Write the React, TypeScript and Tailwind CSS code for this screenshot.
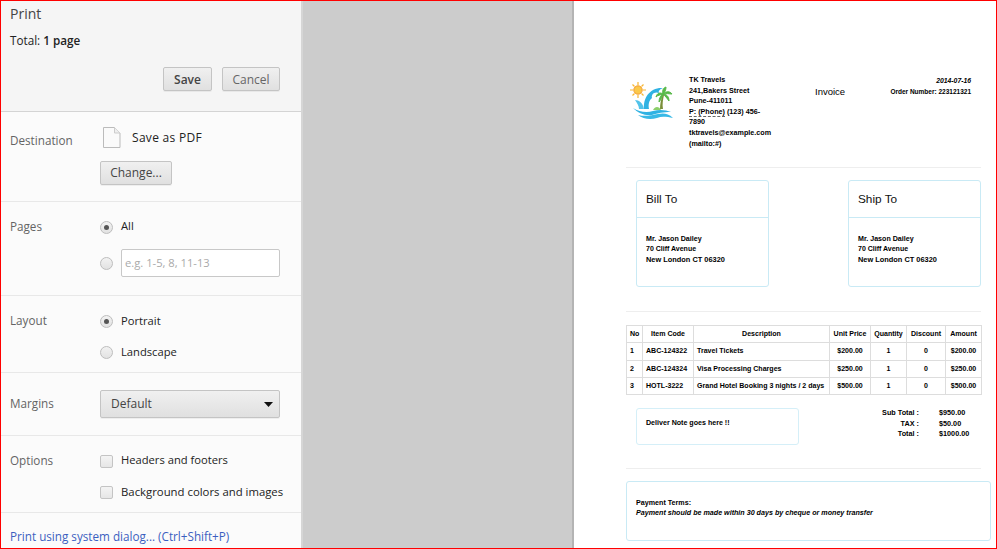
import React from "react";

const ui = "font-['Open_Sans',sans-serif]";
const doc = "font-['Liberation_Sans',Arial,sans-serif]";

const btn =
  "rounded-[2px] border border-[#c4c4c4] bg-gradient-to-b from-[#f0f0f0] to-[#e0e0e0] text-[12px] text-[#444] shadow-[0_1px_0_rgba(0,0,0,0.05)]";

const Section = ({ label, className, children }: { label: string; className: string; children: React.ReactNode }) => (
  <div className={`flex border-b border-[#e8e8e8] pl-[9px] ${className}`}>
    <div className="-mt-[1px] w-[90px] text-[11.7px] leading-[16px] text-[#646464]">{label}</div>
    <div className="flex flex-1 flex-col">{children}</div>
  </div>
);

const Radio = ({ checked }: { checked?: boolean }) => (
  <span className="flex h-[13px] w-[13px] shrink-0 items-center justify-center rounded-full border border-[#bdbdbd] bg-gradient-to-b from-[#f2f2f2] to-[#e2e2e2]">
    {checked && <span className="h-[5px] w-[5px] rounded-full bg-[#555]" />}
  </span>
);

const Check = () => (
  <span className="h-[13px] w-[13px] shrink-0 rounded-[2px] border border-[#c4c4c4] bg-gradient-to-b from-[#f4f4f4] to-[#e6e6e6]" />
);

const Sidebar = () => (
  <aside className={`flex w-[300px] shrink-0 flex-col bg-[#fbfbfb] ${ui}`}>
    <div className="h-[111px] border-b border-[#d4d4d4] bg-[#f5f5f5] pl-[9px] pr-[21px] pt-[3px]">
      <div className="text-[14px] leading-[19px] text-[#444]">Print</div>
      <div className="mt-[9px] text-[11.7px] leading-[16px] text-[#222]">
        Total: <b className="font-semibold">1 page</b>
      </div>
      <div className="mt-[19px] flex justify-end gap-[10px]">
        <button className={`${btn} h-[24px] w-[49px] border-[#8a8a8a] pt-[1px] font-semibold`}>Save</button>
        <button className={`${btn} h-[24px] w-[58px] pt-[1px] text-[#666]`}>Cancel</button>
      </div>
    </div>

    <Section label="Destination" className="h-[90px] pt-[21px]">
      <div className="-mt-[6px] flex items-center">
        <svg width="18" height="21" viewBox="0 0 18 21" className="ml-[3px]">
          <path d="M.5.5h11l5.5 5.5v14.5H.5z" fill="#fafafa" stroke="#bbb" />
          <path d="M11.5.5V6H17" fill="#eee" stroke="#ccc" />
        </svg>
        <span className="ml-[11px] text-[12px] tracking-[0.3px] text-[#222]">Save as PDF</span>
      </div>
      <button className={`${btn} mt-[13px] h-[24px] w-[72px]`}>Change...</button>
    </Section>

    <Section label="Pages" className="h-[94px] pt-[17px]">
      <div className="flex h-[16px] items-center gap-[8px] text-[11.2px] text-[#222]">
        <Radio checked /> <span className="-mt-[1px]">All</span>
      </div>
      <div className="mt-[14px] flex items-center gap-[8px]">
        <Radio />
        <div className="flex h-[28px] w-[159px] items-center rounded-[2px] border border-[#c8c8c8] bg-white pl-[3px] text-[11.2px] text-[#aaa]">
          e.g. 1-5, 8, 11-13
        </div>
      </div>
    </Section>

    <Section label="Layout" className="h-[77px] pt-[17px]">
      <div className="flex h-[16px] items-center gap-[8px] text-[11.2px] text-[#222]">
        <Radio checked /> Portrait
      </div>
      <div className="mt-[15px] flex h-[16px] items-center gap-[8px] text-[11.2px] text-[#222]">
        <Radio /> Landscape
      </div>
    </Section>

    <Section label="Margins" className="h-[63px] pt-[23px]">
      <div className={`${btn} -mt-[6px] flex h-[28px] w-[180px] items-center justify-between pl-[10px] pr-[6px]`}>
        Default
        <svg width="9" height="5" viewBox="0 0 9 5">
          <path d="M0 0h9L4.5 5z" fill="#111" />
        </svg>
      </div>
    </Section>

    <Section label="Options" className="h-[77px] pt-[17px]">
      <div className="flex h-[16px] items-center gap-[8px] text-[11.2px] text-[#222]">
        <Check /> <span className="-mt-[1px]">Headers and footers</span>
      </div>
      <div className="mt-[15px] flex h-[16px] items-center gap-[8px] whitespace-nowrap text-[11.35px] text-[#222]">
        <Check /> <span className="-mt-[1px]">Background colors and images</span>
      </div>
    </Section>

    <div className="pl-[9px] pt-[15px] text-[11.7px] leading-[16px] text-[#3b5fc0]">
      Print using system dialog... (Ctrl+Shift+P)
    </div>
  </aside>
);

const Logo = () => (
  <svg width="46" height="40" viewBox="0 0 46 40">
    <g stroke="#f7b733" strokeWidth="1.2">
      <path d="M8 0v3M8 13v3M0 8h3M13 8h3M2.5 2.5l2 2M11.5 11.5l2 2M13.5 2.5l-2 2M4.500 11.500l-2 2" />
    </g>
    <circle cx="8" cy="8" r="4.200" fill="#fbc94a" stroke="#f39c32" />
    <path d="M14 27C13 16 20 5 33 6 30 7 28 9 29 11 24 9 21 13 22 16 19 18 18 23 19 27z" fill="#2fb2e3" />
    <path d="M5 18c4 0 8 3 9 9l-5 0c0-3-2-6-4-9z" fill="#52c3ea" />
    <path d="M30 27c0-5 1-10 3-15l1 1c-1 5-2 9-1 14z" fill="#7b8f3a" />
    <path d="M33 12c-3-2-6-1-7 3 2-2 4-2 7-3zM33 12c-1-3 0-6 3-7 0 3-1 5-3 7zM33 12c3-3 7-3 9 0-3 0-6-1-9 0zM33 12c3 0 6 2 6 7-2-3-4-5-6-7zM33 12c-2 1-4 4-4 8 2-2 3-5 4-8z" fill="#57b948" stroke="#57b948" />
    <path d="M23 28c2-4 6-4 8 0z" fill="#8ccf6a" />
    <path d="M3 26c6 4 14 5 20 3 7-2 13-1 18 1-8 0-13 1-19 3-7 1-14-2-19-7z" fill="#2fb2e3" />
    <path d="M8 33c8 2 14 0 20-1 5-1 10-1 15 4-6-1-11-2-16 0-7 2-14 1-19-3z" fill="#38b9e6" />
  </svg>
);

const Card = ({ title }: { title: string }) => (
  <div className="h-[107px] w-[133px] rounded-[3px] border border-[#c9eaf5]">
    <div className="flex h-[37px] items-center border-b border-[#c9eaf5] pl-[9px] pt-[2px] text-[11.8px] text-[#111]">{title}</div>
    <div className="pl-[9px] pt-[16px] text-[7.1px] font-bold leading-[10.3px] text-black">
      <div>Mr. Jason Dailey</div>
      <div className="text-[7px]">70 Cliff Avenue</div>
      <div className="text-[7.4px]">New London CT 06320</div>
    </div>
  </div>
);

const rows = [
  ["1", "ABC-124322", "Travel Tickets", "$200.00", "1", "0", "$200.00", "h-[18px]"],
  ["2", "ABC-124324", "Visa Processing Charges", "$250.00", "1", "0", "$250.00", "h-[17px]"],
  ["3", "HOTL-3222", "Grand Hotel Booking 3 nights / 2 days", "$500.00", "1", "0", "$500.00", "h-[17px]"],
];

const cell = "border border-[#ddd] px-[3px] whitespace-nowrap";

const InvoiceTable = () => (
  <table className="w-[355px] table-fixed border-collapse text-[7.05px] font-bold text-black">
    <colgroup>
      <col className="w-[16px]" />
      <col className="w-[51px]" />
      <col className="w-[136px]" />
      <col className="w-[41px]" />
      <col className="w-[36px]" />
      <col className="w-[39px]" />
      <col className="w-[36px]" />
    </colgroup>
    <thead>
      <tr className="h-[17px] text-center">
        {["No", "Item Code", "Description", "Unit Price", "Quantity", "Discount", "Amount"].map((h) => (
          <th key={h} className={`${cell} font-bold`}>
            {h}
          </th>
        ))}
      </tr>
    </thead>
    <tbody>
      {rows.map((r) => (
        <tr key={r[0]} className={r[7]}>
          <td className={cell}>{r[0]}</td>
          <td className={cell}>{r[1]}</td>
          <td className={cell}>{r[2]}</td>
          <td className={`${cell} text-center`}>{r[3]}</td>
          <td className={`${cell} text-center`}>{r[4]}</td>
          <td className={`${cell} text-center`}>{r[5]}</td>
          <td className={`${cell} text-center`}>{r[6]}</td>
        </tr>
      ))}
    </tbody>
  </table>
);

const totals = [
  ["Sub Total :", "$950.00"],
  ["TAX :", "$50.00"],
  ["Total :", "$1000.00"],
];

const InvoicePage = () => (
  <main className={`flex-1 bg-white pl-[52px] pt-[74px] ${doc}`}>
    <div className="flex h-[93px] w-[355px] border-b border-[#eee]">
      <div className="ml-[4px] mt-[7px] w-[59px]">
        <Logo />
      </div>
      <div className="w-[82px] text-[7.2px] font-bold leading-[10.6px] text-black">
        <div>TK Travels</div>
        <div>241,Bakers Street</div>
        <div>Pune-411011</div>
        <div>
          <span className="border-b border-dashed border-[#666]">P: (Phone)</span> (123) 456-7890
        </div>
        <div>tktravels@example.com</div>
        <div>(mailto:#)</div>
      </div>
      <div className="ml-[44px] mt-[10px] w-[61px] text-[9.5px] text-black">Invoice</div>
      <div className="flex-1 pr-[10px] pt-[1px] text-right font-bold leading-[10.6px] text-black">
        <div className="text-[6.8px] italic">2014-07-16</div>
        <div className="whitespace-nowrap text-[6.5px]">Order Number: 223121321</div>
      </div>
    </div>

    <div className="flex h-[144px] w-[355px] justify-between border-b border-[#eee] pl-[10px] pt-[12px]">
      <Card title="Bill To" />
      <Card title="Ship To" />
    </div>

    <div className="pt-[13px]">
      <InvoiceTable />
    </div>

    <div className="flex h-[74px] w-[355px] border-b border-[#eee] pl-[10px] pt-[13px]">
      <div className="flex h-[37px] w-[163px] items-center rounded-[3px] border border-[#d5eff8] pb-[6px] pl-[9px] text-[7.1px] font-bold text-black">
        Deliver Note goes here !!
      </div>
      <div className="ml-[77px] grid h-fit grid-cols-[43px_auto] gap-x-[20px] text-[7.25px] font-bold leading-[10.6px] text-black">
        {totals.map(([k, v]) => (
          <React.Fragment key={k}>
            <div className="whitespace-nowrap text-right">{k}</div>
            <div>{v}</div>
          </React.Fragment>
        ))}
      </div>
    </div>

    <div className="mt-[12px] h-[60px] w-[365px] rounded-[3px] border border-[#c9eaf5] pl-[9px] pt-[16px] text-[7.15px] font-bold leading-[10px] text-black">
      <div>Payment Terms:</div>
      <div className="italic">Payment should be made within 30 days by cheque or money transfer</div>
    </div>
  </main>
);

export default function App() {
  return (
    <div className="flex h-[549px] w-[997px] overflow-hidden border border-[#f00]">
      <Sidebar />
      <div className="w-[273px] shrink-0 border-l-2 border-r-2 border-l-[#d6d6d6] border-r-[#b4b4b4] bg-[#cccccc]" />
      <InvoicePage />
    </div>
  );
}
